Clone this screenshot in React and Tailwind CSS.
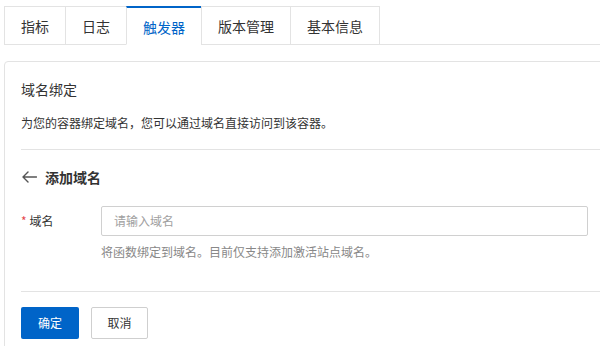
import React from "react";

const tabs = ["指标", "日志", "触发器", "版本管理", "基本信息"];

export default function App() {
  return (
    <div
      className="w-[600px] h-[346px] overflow-hidden bg-white text-[#333]"
      style={{ fontFamily: '"Noto Sans CJK SC", "Noto Sans", sans-serif' }}
    >
      <div className="pt-[6px] pl-[4px]">
        <div className="flex border-b border-[#e3e3e3]">
          {tabs.map((t, i) => {
            const active = i === 2;
            return (
              <div
                key={t}
                className={
                  "-mb-px h-[39px] px-4 flex items-center text-[14px] leading-[20px] border-l border-b " +
                  (i === tabs.length - 1 ? "border-r " : "") +
                  (active
                    ? "border-t-2 border-t-[#0064c8] border-x-[#e3e3e3] border-b-white text-[#0064c8] pt-[1px]"
                    : "border-t border-[#e3e3e3] text-[#333]")
                }
              >
                {t}
              </div>
            );
          })}
        </div>
      </div>

      <div className="mt-[16px] ml-[4px] w-[640px] border border-[#e3e3e3] rounded-[4px] pt-4 pl-4">
        <div className="text-[14px] leading-[22px] text-[#333]">域名绑定</div>
        <div className="mt-[14px] text-[12px] leading-[18px] text-[#333]">
          为您的容器绑定域名，您可以通过域名直接访问到该容器。
        </div>
        <div className="mt-[17px] h-px bg-[#e3e3e3]" />
        <div className="mt-[17px] flex items-center h-[20px]">
          <svg width="15" height="12" viewBox="0 0 15 12" className="ml-[1px]" fill="none">
            <path d="M14.5 6H1.2M6 1L1 6l5 5" stroke="#555" strokeWidth="1.4" strokeLinecap="round" strokeLinejoin="round" />
          </svg>
          <span className="ml-[8px] text-[14px] font-bold leading-[20px] text-[#333]">添加域名</span>
        </div>
        <div className="mt-[19px] flex">
          <div className="w-[80px] h-[30px] flex items-center text-[12px]">
            <span className="text-[#e5484d] mr-[3px] text-[12px]">*</span>
            <span className="text-[#333]">域名</span>
          </div>
          <div>
            <div className="w-[487px] h-[30px] border border-[#d0d0d0] rounded-[2px] flex items-center px-3 text-[12px] text-[#a0a0a0]">
              请输入域名
            </div>
            <div className="mt-[7px] text-[12px] leading-[18px] text-[#888]">
              将函数绑定到域名。目前仅支持添加激活站点域名。
            </div>
          </div>
        </div>
        <div className="mt-[30px] h-px bg-[#e3e3e3]" />
        <div className="mt-[15px] flex gap-[12px]">
          <button className="w-[58px] h-[32px] bg-[#0064c8] text-white text-[12px] rounded-[2px]">确定</button>
          <button className="w-[57px] h-[32px] bg-white border border-[#cfcfcf] text-[#333] text-[12px] rounded-[2px]">取消</button>
        </div>
        <div className="h-[20px]" />
      </div>
    </div>
  );
}
